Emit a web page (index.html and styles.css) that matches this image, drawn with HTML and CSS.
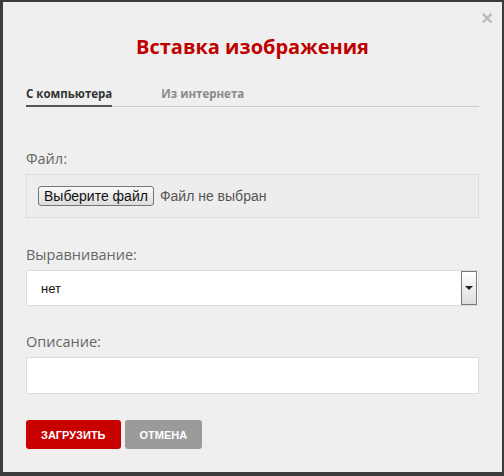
FILE: index.html
```html
<!DOCTYPE html>
<html lang="ru">
<head>
    <meta charset="UTF-8">
    <title>Вставка изображения</title>
    <link rel="stylesheet" href="styles.css">
</head>
<body>
    <div class="modal">
        <span class="close">&times;</span>
        <h2 class="modal-title">Вставка изображения</h2>
        <div class="tabs">
            <span class="tab active">С компьютера</span>
            <span class="tab">Из интернета</span>
        </div>
        <div class="field field-file">
            <label>Файл:</label>
            <div class="file-box">
                <span class="file-btn">Выберите файл</span>
                <span class="file-name">Файл не выбран</span>
            </div>
        </div>
        <div class="field field-align">
            <label>Выравнивание:</label>
            <div class="select">
                <span class="select-value">нет</span>
                <span class="select-arrow"></span>
            </div>
        </div>
        <div class="field field-desc">
            <label>Описание:</label>
            <div class="text-input"></div>
        </div>
        <div class="actions">
            <button class="btn btn-primary">Загрузить</button>
            <button class="btn btn-cancel">Отмена</button>
        </div>
    </div>
</body>
</html>
```

FILE: styles.css
```css
body {
    margin: 0;
    background-color: #3c3c3c;
    font-family: "Open Sans", Arial, sans-serif;
}
.modal {
    position: relative;
    box-sizing: border-box;
    width: 499px;
    height: 470px;
    margin: 2px 2px 4px 3px;
    padding: 24px 23px 0 23px;
    background-color: #efefef;
}
.close {
    position: absolute;
    top: 5px;
    right: 9px;
    font-family: Arial, sans-serif;
    font-size: 20px;
    font-weight: bold;
    color: #bbb;
}
.modal-title {
    margin: 5px 0 0 0;
    text-align: center;
    font-size: 20px;
    font-weight: bold;
    color: #c00000;
    line-height: 32px;
}
.tabs {
    display: flex;
    margin-top: 23px;
    border-bottom: 1px solid #ccc;
}
.tab {
    font-size: 11.5px;
    font-weight: bold;
    color: #8a8a8a;
    padding-bottom: 4px;
    margin-right: 49px;
}
.tab.active {
    color: #333;
    border-bottom: 2px solid #555;
    margin-bottom: -1px;
}
.field-file {
    margin-top: 42px;
}
.field-align {
    margin-top: 27px;
}
.field-desc {
    margin-top: 26px;
}
label {
    display: block;
    font-size: 14.5px;
    color: #666;
    margin-bottom: 6px;
}
.file-box {
    display: flex;
    align-items: center;
    height: 42px;
    padding: 0 11px;
    border: 1px solid #ddd;
    background-color: #ededed;
}
.file-btn {
    font-family: Arial, sans-serif;
    font-size: 14px;
    color: #111;
    padding: 1px 5px;
    border: 1px solid #777;
    border-radius: 3px;
    background: linear-gradient(#fafafa, #dcdcdc);
}
.file-name {
    font-family: Arial, sans-serif;
    font-size: 14px;
    color: #555;
    margin-left: 6px;
}
.select {
    display: flex;
    align-items: center;
    justify-content: space-between;
    height: 34px;
    border: 1px solid #ddd;
    background-color: #fff;
}
.select-value {
    font-family: Arial, sans-serif;
    font-size: 13px;
    color: #111;
    margin-left: 14px;
}
.select-arrow {
    position: relative;
    width: 14px;
    height: 32px;
    margin-right: 1px;
    border: 1px solid #777;
    background: linear-gradient(#fff, #ddd);
}
.select-arrow::after {
    content: "";
    position: absolute;
    left: 3px;
    top: 14px;
    border-left: 4px solid transparent;
    border-right: 4px solid transparent;
    border-top: 4px solid #222;
}
.text-input {
    height: 35px;
    border: 1px solid #ddd;
    background-color: #fff;
}
.actions {
    display: flex;
    gap: 4px;
    margin-top: 26px;
}
.btn {
    height: 29px;
    border: none;
    border-radius: 3px;
    padding: 0 15px;
    font-family: Arial, sans-serif;
    font-size: 11px;
    font-weight: bold;
    text-transform: uppercase;
    color: #fff;
}
.btn-primary {
    background-color: #c80000;
}
.btn-cancel {
    background-color: #9a9a9a;
}
```
